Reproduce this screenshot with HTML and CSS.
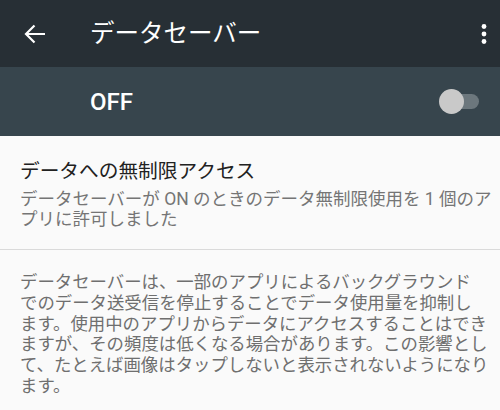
FILE: index.html
```html
<html>
  <head>
    <meta charset="utf-8">
    <title>データセーバー</title>
    <link rel="stylesheet" href="styles.css">
  </head>
  <body>
    <div class="appbar">
      <svg class="appbar_back" width="30" height="30" viewBox="0 0 30 30">
        <path d="M25 15H6M14.5 6.5L6 15l8.5 8.5" fill="none" stroke="#ffffff" stroke-width="2.2"/>
      </svg>
      <div class="appbar_title">データセーバー</div>
      <svg class="appbar_menu" width="8" height="24" viewBox="0 0 8 24">
        <circle cx="4" cy="4.5" r="2.4" fill="#ffffff"/>
        <circle cx="4" cy="12" r="2.4" fill="#ffffff"/>
        <circle cx="4" cy="19.5" r="2.4" fill="#ffffff"/>
      </svg>
    </div>

    <div class="masterbar">
      <div class="masterbar_label">OFF</div>
      <div class="switch">
        <div class="switch_track"></div>
        <div class="switch_thumb"></div>
      </div>
    </div>

    <div class="pref">
      <div class="pref_title">データへの無制限アクセス</div>
      <div class="pref_summary">データセーバーが ON のときのデータ無制限使用を 1 個のア<br>プリに許可しました</div>
    </div>

    <div class="footer">
      データセーバーは、一部のアプリによるバックグラウンド<br>
      でのデータ送受信を停止することでデータ使用量を抑制し<br>
      ます。使用中のアプリからデータにアクセスすることはでき<br>
      ますが、その頻度は低くなる場合があります。この影響とし<br>
      て、たとえば画像はタップしないと表示されないようになり<br>
      ます。
    </div>
  </body>
</html>
```

FILE: styles.css
```css
body
  {
  margin: 0;
  background: #fafafa;
  font-family: Roboto, "Noto Sans CJK JP", sans-serif;
  }

.appbar
  {
  height: 67px;
  background: #272f35;
  display: flex;
  align-items: center;
  padding: 0 2px 0 20px;
  }

.appbar_back
  {
  flex: none;
  }

.appbar_title
  {
  flex: 1;
  margin-left: 40px;
  color: #ffffff;
  font-size: 24.5px;
  line-height: 30px;
  white-space: nowrap;
  }

.appbar_menu
  {
  flex: none;
  margin-right: 10px;
  }

.masterbar
  {
  height: 69px;
  background: #37454d;
  display: flex;
  align-items: center;
  justify-content: space-between;
  padding: 0 21px 0 90px;
  }

.masterbar_label
  {
  color: #ffffff;
  font-size: 24px;
  font-weight: 500;
  }

.switch
  {
  position: relative;
  width: 40px;
  height: 25px;
  }

.switch_track
  {
  position: absolute;
  left: 4px;
  top: 5px;
  width: 36px;
  height: 15px;
  border-radius: 8px;
  background: #6c777d;
  }

.switch_thumb
  {
  position: absolute;
  left: 0;
  top: 0;
  width: 25px;
  height: 25px;
  border-radius: 50%;
  background: #c9c9c9;
  }

.pref
  {
  padding: 24px 8px 20px 20px;
  border-bottom: 1px solid #dadada;
  }

.pref_title
  {
  color: #212121;
  font-size: 19.7px;
  line-height: 24px;
  white-space: nowrap;
  }

.pref_summary
  {
  margin-top: 5px;
  color: #757575;
  font-size: 17.5px;
  line-height: 20px;
  white-space: nowrap;
  }

.footer
  {
  padding: 22px 8px 0 20px;
  color: #6f6f6f;
  font-size: 17.4px;
  line-height: 20.8px;
  white-space: nowrap;
  }
```
